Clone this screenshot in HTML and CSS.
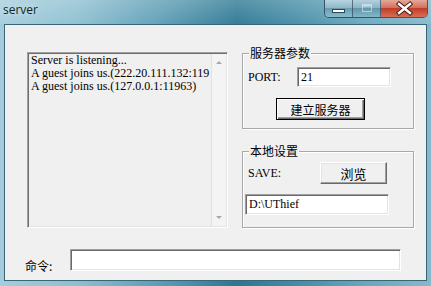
FILE: index.html
```html
<!DOCTYPE html>
<html>

<head>
    <title>server</title>
    <link rel="stylesheet" href="styles.css">
</head>

<body>
    <div class="window">
        <div class="titlebar">
            <span class="title">server</span>
            <div class="caption-buttons">
                <div class="cap-btn cap-min">
                    <svg width="27" height="17" viewBox="0 0 27 17">
                        <rect x="7.5" y="9.5" width="12" height="3" fill="#fff" stroke="#2d4556" stroke-width="1" />
                    </svg>
                </div>
                <div class="cap-btn cap-max">
                    <svg width="28" height="17" viewBox="0 0 28 17">
                        <rect x="9.5" y="4.5" width="9" height="7" fill="none" stroke="rgba(235,245,250,0.55)" stroke-width="1" />
                        <rect x="10" y="5" width="8" height="1.5" fill="rgba(235,245,250,0.55)" />
                    </svg>
                </div>
                <div class="cap-btn cap-close">
                    <svg width="47" height="17" viewBox="0 0 47 17">
                        <path d="M18 4 L29 13 M29 4 L18 13" stroke="#4a1a14" stroke-width="4.4" stroke-linecap="square" />
                        <path d="M18 4 L29 13 M29 4 L18 13" stroke="#fff" stroke-width="2.4" stroke-linecap="square" />
                    </svg>
                </div>
            </div>
        </div>

        <div class="client">
            <div class="main-row">
                <div class="log-box">
                    <div class="log-text">
                        <div>Server is listening...</div>
                        <div>A guest joins us.(222.20.111.132:119</div>
                        <div>A guest joins us.(127.0.0.1:11963)</div>
                    </div>
                    <div class="scrollbar">
                        <span class="arrow arrow-up"></span>
                        <span class="arrow arrow-down"></span>
                    </div>
                </div>

                <div class="side">
                    <div class="group group-server">
                        <span class="group-title">服务器参数</span>
                        <div class="port-row">
                            <span class="label port-label">PORT:</span>
                            <div class="edit port-edit">21</div>
                        </div>
                        <div class="btn btn-default build-btn">建立服务器</div>
                    </div>

                    <div class="group group-local">
                        <span class="group-title">本地设置</span>
                        <div class="save-row">
                            <span class="label save-label">SAVE:</span>
                            <div class="btn browse-btn">浏览</div>
                        </div>
                        <div class="edit path-edit">D:\UThief</div>
                    </div>
                </div>
            </div>

            <div class="command-row">
                <span class="command-label">命令:</span>
                <div class="edit command-edit"></div>
            </div>
        </div>
    </div>
</body>

</html>
```

FILE: styles.css
```css
body {
    margin: 0;
    width: 431px;
    height: 286px;
    overflow: hidden;
}

.window {
    width: 431px;
    height: 286px;
    display: flex;
    flex-direction: column;
    background: linear-gradient(90deg, #a4cddc 0%, #8cbfd0 18%, #5a9bb3 38%, #2a7792 55%, #478ea7 70%, #6aa7bc 85%, #84b9cb 100%);
}

.titlebar {
    height: 24px;
    display: flex;
    justify-content: space-between;
    align-items: flex-start;
    padding: 0 3px;
    background: linear-gradient(rgba(255, 255, 255, 0.22), rgba(255, 255, 255, 0.05));
}

.title {
    font-family: "Open Sans", "Noto Sans", sans-serif;
    font-size: 12px;
    line-height: 16px;
    padding-top: 2px;
    color: #141e24;
    text-shadow: 0 0 6px rgba(230, 245, 250, 0.9);
}

.caption-buttons {
    display: flex;
    height: 17px;
    border: 1px solid rgba(30, 55, 75, 0.75);
    border-top: none;
    border-radius: 0 0 5px 5px;
    overflow: hidden;
}

.cap-btn {
    height: 17px;
}

.cap-btn svg {
    display: block;
}

.cap-min {
    width: 27px;
    background: linear-gradient(#b8d4df, #90b9c9 45%, #6a9cb1 50%, #88bccd);
    border-right: 1px solid rgba(30, 55, 75, 0.6);
}

.cap-max {
    width: 27px;
    background: linear-gradient(#b2d0dc, #8bb4c5 45%, #6597ac 50%, #83b6c8);
    border-right: 1px solid rgba(30, 55, 75, 0.6);
}

.cap-close {
    width: 46px;
    background: linear-gradient(#e6a897, #d2715d 45%, #c13d28 50%, #d86e56);
}

.client {
    height: 257px;
    margin: 0 4px;
    box-sizing: border-box;
    border: 1px solid #3a6579;
    background-color: #f0f0f0;
}

.main-row {
    display: flex;
    gap: 14px;
    padding: 27px 0 0 22px;
}

.log-box {
    width: 201px;
    height: 176px;
    box-sizing: border-box;
    display: flex;
    border: 1px solid;
    border-color: #a0a0a0 #ffffff #ffffff #a0a0a0;
    box-shadow: inset 1px 1px #6e6e6e, inset -1px -1px #e3e3e3;
    background-color: #f0f0f0;
}

.log-text {
    flex: 1;
    overflow: hidden;
    white-space: nowrap;
    padding: 1px 0 0 3px;
    font-family: "Liberation Serif", serif;
    font-size: 12px;
    line-height: 13px;
    color: #000;
}

.scrollbar {
    width: 15px;
    margin: 1px 1px 1px 0;
    display: flex;
    flex-direction: column;
    justify-content: space-between;
    align-items: center;
    padding: 7px 0;
    box-sizing: border-box;
    border-left: 1px solid #e2e2e2;
    background-color: #f4f4f4;
}

.arrow {
    width: 0;
    height: 0;
    border-left: 3px solid transparent;
    border-right: 3px solid transparent;
}

.arrow-up {
    border-bottom: 3px solid #a8a8a8;
}

.arrow-down {
    border-top: 3px solid #a8a8a8;
}

.side {
    width: 172px;
    margin-top: 1px;
    display: flex;
    flex-direction: column;
    gap: 22px;
}

.group {
    box-sizing: border-box;
    display: flex;
    flex-direction: column;
    border: 1px solid #a8a8a8;
    box-shadow: inset 1px 1px #fff, 1px 1px #fff;
}

.group-server {
    height: 76px;
}

.group-local {
    height: 77px;
}

.group-title {
    align-self: flex-start;
    margin: -8px 0 0 6px;
    padding: 0 1px;
    background-color: #f0f0f0;
    font-family: "Noto Sans CJK SC", sans-serif;
    font-size: 12px;
    line-height: 14px;
    color: #000;
}

.label {
    font-family: "Liberation Serif", serif;
    font-size: 12px;
    color: #000;
}

.port-row {
    display: flex;
    align-items: center;
    margin-top: 7px;
    padding-left: 5px;
}

.port-label {
    width: 49px;
}

.save-row {
    display: flex;
    align-items: center;
    margin-top: 4px;
    padding-left: 5px;
}

.save-label {
    width: 72px;
    padding-top: 1px;
}

.edit {
    box-sizing: border-box;
    border: 1px solid;
    border-color: #a0a0a0 #ffffff #ffffff #a0a0a0;
    box-shadow: inset 1px 1px #696969, inset -1px -1px #e3e3e3;
    background-color: #fff;
    font-family: "Liberation Serif", serif;
    font-size: 12px;
    line-height: 14px;
    color: #000;
    padding: 2px 3px;
}

.port-edit {
    width: 94px;
    height: 20px;
}

.path-edit {
    width: 144px;
    height: 21px;
    margin: 10px 0 0 2px;
}

.btn {
    box-sizing: border-box;
    display: flex;
    align-items: center;
    justify-content: center;
    height: 22px;
    border: 1px solid;
    border-color: #ffffff #696969 #696969 #ffffff;
    box-shadow: inset -1px -1px #a0a0a0, inset 1px 1px #e3e3e3;
    background-color: #f0f0f0;
    font-family: "Noto Sans CJK SC", sans-serif;
    font-size: 12px;
    color: #000;
}

.btn-default {
    border: 1px solid #000;
    box-shadow: inset 1px 1px #fff, inset -1px -1px #696969, inset -2px -2px #a0a0a0;
}

.build-btn {
    width: 89px;
    margin: 11px 0 0 33px;
}

.browse-btn {
    width: 67px;
    font-size: 13px;
}

.command-row {
    display: flex;
    align-items: flex-start;
    margin-top: 21px;
    padding-left: 20px;
}

.command-label {
    width: 45px;
    margin-top: 10px;
    font-family: "Noto Sans CJK SC", sans-serif;
    font-size: 12px;
    line-height: 14px;
    color: #000;
}

.command-edit {
    width: 331px;
    height: 22px;
}
```
